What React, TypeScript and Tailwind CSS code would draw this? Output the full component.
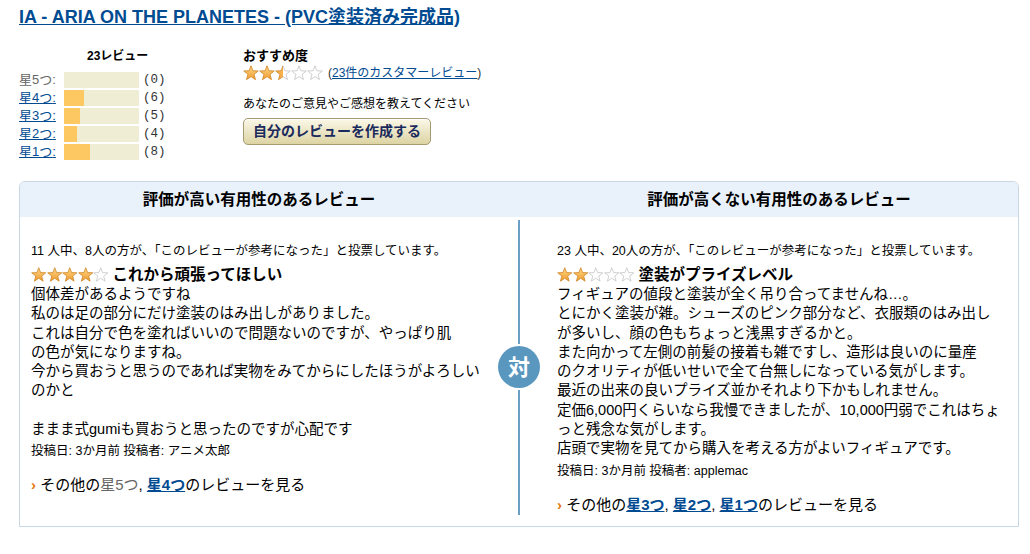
const STAR_POINTS =
  "10,1 12.4,7.2 19.1,7.5 13.8,11.7 15.6,18.3 10,14.5 4.4,18.3 6.2,11.7 0.9,7.5 7.6,7.2";

type StarKind = "full" | "half" | "empty";

function Star({ kind, size }: { kind: StarKind; size: number }) {
  const fill = kind === "full" ? "url(#starFull)" : kind === "half" ? "url(#starHalf)" : "#ffffff";
  const stroke = kind === "full" ? "#d08a2e" : kind === "half" ? "url(#starHalfStroke)" : "#c8c8c8";
  return (
    <svg width={size} height={size} viewBox="0 0 20 20" className="block shrink-0">
      <polygon points={STAR_POINTS} fill={fill} stroke={stroke} strokeWidth="1.1" strokeLinejoin="round" />
    </svg>
  );
}

function Stars({ value, size }: { value: number; size: number }) {
  const kinds: StarKind[] = [1, 2, 3, 4, 5].map((i) =>
    value >= i ? "full" : value >= i - 0.5 ? "half" : "empty"
  );
  return (
    <span className="flex items-center">
      {kinds.map((k, i) => (
        <Star key={i} kind={k} size={size} />
      ))}
    </span>
  );
}

const histogram = [
  { label: "星5つ", count: 0, link: false },
  { label: "星4つ", count: 6, link: true },
  { label: "星3つ", count: 5, link: true },
  { label: "星2つ", count: 4, link: true },
  { label: "星1つ", count: 8, link: true },
];

const goodLines = [
  "個体差があるようですね",
  "私のは足の部分にだけ塗装のはみ出しがありました。",
  "これは自分で色を塗ればいいので問題ないのですが、やっぱり肌",
  "の色が気になりますね。",
  "今から買おうと思うのであれば実物をみてからにしたほうがよろしい",
  "のかと",
  "",
  "ままま式gumiも買おうと思ったのですが心配です",
];

const badLines = [
  "フィギュアの値段と塗装が全く吊り合ってませんね…。",
  "とにかく塗装が雑。シューズのピンク部分など、衣服類のはみ出し",
  "が多いし、顔の色もちょっと浅黒すぎるかと。",
  "また向かって左側の前髪の接着も雑ですし、造形は良いのに量産",
  "のクオリティが低いせいで全て台無しになっている気がします。",
  "最近の出来の良いプライズ並かそれより下かもしれません。",
  "定価6,000円くらいなら我慢できましたが、10,000円弱でこれはちょ",
  "っと残念な気がします。",
  "店頭で実物を見てから購入を考える方がよいフィギュアです。",
];

function Review({
  votes,
  rating,
  title,
  lines,
  author,
  more,
}: {
  votes: [string, string];
  rating: number;
  title: string;
  lines: string[];
  author: string;
  more: React.ReactNode;
}) {
  return (
    <div className="pt-[26px]">
      <div className="text-[12.5px] leading-[16px] whitespace-nowrap">
        {votes[0]} 人中、{votes[1]}人の方が、「このレビューが参考になった」と投票しています。
      </div>
      <div className="mt-[6px] flex h-[20px] items-center">
        <Stars value={rating} size={15.5} />
        <span className="ml-[4px] text-[15.5px] font-bold whitespace-nowrap">{title}</span>
      </div>
      <div className="text-[14.5px] leading-[19.3px]">
        {lines.map((l, i) => (
          <div key={i} className="h-[19.3px] whitespace-nowrap">
            {l}
          </div>
        ))}
      </div>
      <div className="mt-[4px] text-[12.5px] leading-[16px] whitespace-nowrap">
        投稿日: 3か月前 投稿者: {author}
      </div>
      <div className="mt-[16px] text-[15px] leading-[20px] whitespace-nowrap">
        <span className="font-bold text-[#e47911]">›</span> その他の{more}のレビューを見る
      </div>
    </div>
  );
}

const starLink = "font-bold text-[#004b91] underline";

export default function App() {
  return (
    <div className="relative h-[554px] w-[1030px] overflow-hidden bg-white font-['Liberation_Sans','Noto_Sans_CJK_JP',sans-serif] text-black">
      <svg className="absolute h-0 w-0">
        <defs>
          <linearGradient id="starFull" x1="0" y1="0" x2="0" y2="1">
            <stop offset="0" stopColor="#ffd98c" />
            <stop offset="1" stopColor="#ef9a2a" />
          </linearGradient>
          <linearGradient id="starHalf" x1="0" y1="0" x2="1" y2="0">
            <stop offset="0" stopColor="#f7b04a" />
            <stop offset="0.5" stopColor="#f7b04a" />
            <stop offset="0.5" stopColor="#ffffff" />
            <stop offset="1" stopColor="#ffffff" />
          </linearGradient>
          <linearGradient id="starHalfStroke" x1="0" y1="0" x2="1" y2="0">
            <stop offset="0" stopColor="#d08a2e" />
            <stop offset="0.5" stopColor="#d08a2e" />
            <stop offset="0.5" stopColor="#c8c8c8" />
            <stop offset="1" stopColor="#c8c8c8" />
          </linearGradient>
        </defs>
      </svg>

      <div className="pl-[19px] pt-[6px]">
        <a className="text-[18px] leading-[22px] font-bold text-[#004b91] underline">
          IA - ARIA ON THE PLANETES - (PVC塗装済み完成品)
        </a>
      </div>

      <div className="mt-[18px] flex pl-[19px]">
        <div className="w-[224px]">
          <div className="pl-[68px] text-[12px] leading-[16px] font-bold">23レビュー</div>
          <div className="mt-[8px]">
            {histogram.map((h) => (
              <div key={h.label} className="flex h-[18px] items-start">
                <span
                  className={
                    "w-[45px] text-[13px] leading-[16px] " +
                    (h.link ? "text-[#004b91] underline" : "text-[#666666]")
                  }
                >
                  {h.label}:
                </span>
                <div className="h-[16px] w-[75px] bg-[#efedd3]">
                  <div className="h-full bg-[#fdc862]" style={{ width: `${Math.round((h.count / 23) * 75)}px` }} />
                </div>
                <span className="ml-[4px] font-['Liberation_Mono',monospace] text-[12.5px] leading-[16px] text-[#333333]">
                  ({h.count})
                </span>
              </div>
            ))}
          </div>
        </div>

        <div>
          <div className="text-[13px] leading-[16px] font-bold">おすすめ度</div>
          <div className="mt-[1px] flex h-[16px] items-center text-[12px]">
            <Stars value={2.5} size={16} />
            <span className="ml-[5px] text-[#333333]">
              (<a className="text-[#004b91] underline">23件のカスタマーレビュー</a>)
            </span>
          </div>
          <div className="mt-[15px] text-[12px] leading-[16px]">あなたのご意見やご感想を教えてください</div>
          <button className="mt-[6px] flex h-[27px] w-[188px] items-center justify-center rounded-[5px] border border-[#a59a72] bg-linear-to-b from-[#fbf8e8] to-[#ddd3a3] text-[14px] font-bold text-[#1b2a5c] shadow-[inset_0_1px_0_#ffffff]">
            自分のレビューを作成する
          </button>
        </div>
      </div>

      <div className="mt-[19px] ml-[19px] w-[1000px] rounded-t-[6px] border border-[#c7d7e4]">
        <div className="grid h-[35px] grid-cols-[478px_42px_1fr] rounded-t-[5px] bg-[#e9f1fa] text-[15.5px] font-bold">
          <div className="flex items-center justify-center pt-[1px]">評価が高い有用性のあるレビュー</div>
          <div />
          <div className="flex items-center justify-center pt-[1px]">評価が高くない有用性のあるレビュー</div>
        </div>
        <div className="grid grid-cols-[478px_42px_1fr]">
          <div className="pl-[11px]">
            <Review
              votes={["11", "8"]}
              rating={4}
              title="これから頑張ってほしい"
              lines={goodLines}
              author="アニメ太郎"
              more={
                <>
                  <span className="text-[#666666]">星5つ</span>, <a className={starLink}>星4つ</a>
                </>
              }
            />
          </div>
          <div className="flex flex-col items-center gap-[2px] pt-[3px] pb-[11px]">
            <div className="w-[2px] flex-1 bg-[#6c9fc5]" />
            <div className="flex h-[42px] w-[42px] items-center justify-center rounded-full bg-[#5a97bf] text-[22px] font-bold text-white">
              対
            </div>
            <div className="w-[2px] flex-1 bg-[#6c9fc5]" />
          </div>
          <div className="pl-[17px]">
            <Review
              votes={["23", "20"]}
              rating={2}
              title="塗装がプライズレベル"
              lines={badLines}
              author="applemac"
              more={
                <>
                  <a className={starLink}>星3つ</a>, <a className={starLink}>星2つ</a>,{" "}
                  <a className={starLink}>星1つ</a>
                </>
              }
            />
            <div className="h-[11px]" />
          </div>
        </div>
      </div>
    </div>
  );
}
